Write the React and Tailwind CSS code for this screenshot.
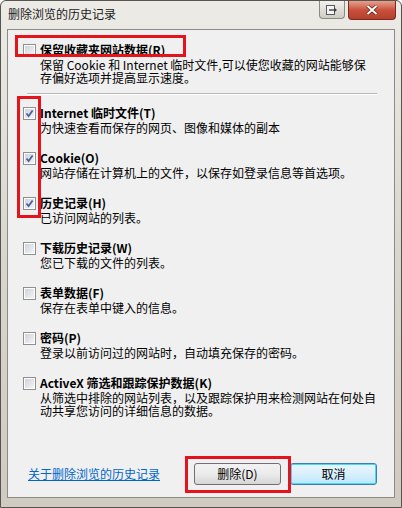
import React from 'react';

const FONT = { fontFamily: '"Noto Sans CJK SC", "Liberation Sans", sans-serif' };

const ITEMS = [
  { label: 'Internet 临时文件(T)', desc: ['为快速查看而保存的网页、图像和媒体的副本'], checked: true },
  { label: 'Cookie(O)', desc: ['网站存储在计算机上的文件，以保存如登录信息等首选项。'], checked: true },
  { label: '历史记录(H)', desc: ['已访问网站的列表。'], checked: true },
  { label: '下载历史记录(W)', desc: ['您已下载的文件的列表。'], checked: false },
  { label: '表单数据(F)', desc: ['保存在表单中键入的信息。'], checked: false },
  { label: '密码(P)', desc: ['登录以前访问过的网站时，自动填充保存的密码。'], checked: false },
  {
    label: 'ActiveX 筛选和跟踪保护数据(K)',
    desc: ['从筛选中排除的网站列表，以及跟踪保护用来检测网站在何处自', '动共享您访问的详细信息的数据。'],
    checked: false,
  },
];

function Checkbox({ checked }) {
  return (
    <div className="w-[13px] h-[13px] shrink-0 border border-[#8e8f8f] bg-white p-[1px]">
      <div className="relative w-full h-full bg-gradient-to-br from-[#cfd3da] to-[#f4f4f6]">
        {checked && (
          <svg viewBox="0 0 9 9" className="absolute inset-0 w-[9px] h-[9px]">
            <path d="M1.5 4.5 L3.6 7 L7.6 1.5" fill="none" stroke="#4a5f9e" strokeWidth="1.8" />
          </svg>
        )}
      </div>
    </div>
  );
}

function Item({ label, desc, checked }) {
  return (
    <div className="flex flex-col">
      <div className="flex items-center h-[14px]">
        <Checkbox checked={checked} />
        <span className="ml-[4px] text-[12px] leading-[14px] font-bold text-black whitespace-nowrap">{label}</span>
      </div>
      <div className="mt-[1px] pl-[17px] text-[12px] leading-[13px] text-black">
        {desc.map((d) => (
          <div key={d} className="whitespace-nowrap">{d}</div>
        ))}
      </div>
    </div>
  );
}

export default function App() {
  return (
    <div className="relative w-[402px] h-[508px] overflow-hidden" style={FONT}>
      <div className="w-full h-full flex flex-col rounded-t-[6px] border border-[#55544f] bg-gradient-to-b from-[#ecebe6] via-[#d9d6cd] to-[#cfcbc0]">
        {/* title bar */}
        <div className="h-[28px] shrink-0 flex items-start">
          <div className="pl-[7px] pt-[6px] text-[12px] leading-[14px] text-[#1a1a1a]">删除浏览的历史记录</div>
          <div className="ml-auto flex items-start mr-[5px]">
            <div className="w-[26px] h-[18px] flex items-center justify-center rounded-b-[4px] border border-t-0 border-[#8b8a84] bg-gradient-to-b from-[#f2f1ed] to-[#cfccc3]">
              <svg viewBox="0 0 12 10" className="w-[12px] h-[10px]">
                <rect x="0.5" y="0.5" width="8" height="9" fill="#f4f4f4" stroke="#5a5a5a" />
                <path d="M3 5 H10" stroke="#3e3e3e" strokeWidth="1.4" />
                <path d="M8 2.5 L11 5 L8 7.5 Z" fill="#3e3e3e" />
              </svg>
            </div>
            <div className="ml-[3px] w-[48px] h-[19px] flex items-center justify-center rounded-b-[4px] border border-t-0 border-[#7a2a1e] bg-gradient-to-b from-[#e5a08f] via-[#c9513c] to-[#b4402c]">
              <svg viewBox="0 0 12 10" className="w-[12px] h-[10px]">
                <path d="M1.5 1 L10.5 9 M10.5 1 L1.5 9" stroke="#5b1a10" strokeWidth="3.4" />
                <path d="M1.5 1 L10.5 9 M10.5 1 L1.5 9" stroke="#ffffff" strokeWidth="2" />
              </svg>
            </div>
          </div>
        </div>

        {/* client area */}
        <div className="mx-[6px] h-[469px] shrink-0 border border-[#8d8b84] bg-[#f0f0f0] flex flex-col">
          <div className="pl-[15px] pt-[13px]">
            <Item
              label="保留收藏夹网站数据(R)"
              desc={['保留 Cookie 和 Internet 临时文件,可以使您收藏的网站能够保', '存偏好选项并提高显示速度。']}
              checked={false}
            />
          </div>
          <div className="mt-[9px] ml-[19px] mr-[17px] border-t border-[#b8b8b8] border-b border-b-white" />
          <div className="mt-[11px] pl-[15px] flex flex-col gap-[17px]">
            {ITEMS.map((it) => (
              <Item key={it.label} {...it} />
            ))}
          </div>
          <div className="mt-[46px] flex items-center h-[22px]">
            <a href="#" className="pl-[20px] text-[12px] leading-[14px] text-[#0066cc] underline">关于删除浏览的历史记录</a>
            <div className="ml-auto mr-[17px] flex gap-[9px]">
              <button className="w-[87px] h-[22px] rounded-[3px] border border-[#707070] bg-gradient-to-b from-[#f2f2f2] via-[#ebebeb] to-[#d6d6d6] text-[12px] leading-[14px] text-black">
                删除(D)
              </button>
              <button className="w-[87px] h-[22px] rounded-[3px] border border-[#3c7fb1] bg-gradient-to-b from-[#eaf6fd] via-[#d9f0fc] to-[#bee6fd] text-[12px] leading-[14px] text-black shadow-[inset_0_0_0_1px_#48d8fb]">
                取消
              </button>
            </div>
          </div>
        </div>
      </div>

      {/* red annotation boxes */}
      <div className="absolute left-[15px] top-[35px] w-[171px] h-[22px] border-[3px] border-[#e3141b]" />
      <div className="absolute left-[17px] top-[96px] w-[24px] h-[122px] border-[3px] border-[#e3141b]" />
      <div className="absolute left-[185px] top-[456px] w-[106px] h-[37px] border-[3px] border-[#e3141b]" />
    </div>
  );
}
